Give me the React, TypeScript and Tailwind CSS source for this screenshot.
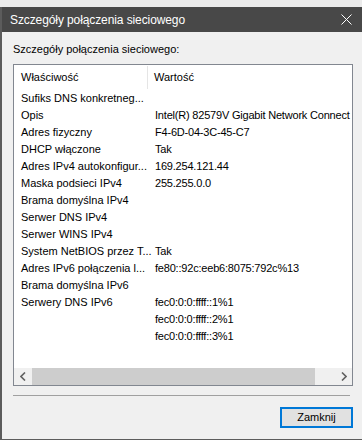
const rows: [string, string][] = [
  ["Sufiks DNS konkretneg...", ""],
  ["Opis", "Intel(R) 82579V Gigabit Network Connect"],
  ["Adres fizyczny", "F4-6D-04-3C-45-C7"],
  ["DHCP włączone", "Tak"],
  ["Adres IPv4 autokonfigur...", "169.254.121.44"],
  ["Maska podsieci IPv4", "255.255.0.0"],
  ["Brama domyślna IPv4", ""],
  ["Serwer DNS IPv4", ""],
  ["Serwer WINS IPv4", ""],
  ["System NetBIOS przez T...", "Tak"],
  ["Adres IPv6 połączenia l...", "fe80::92c:eeb6:8075:792c%13"],
  ["Brama domyślna IPv6", ""],
  ["Serwery DNS IPv6", "fec0:0:0:ffff::1%1"],
  ["", "fec0:0:0:ffff::2%1"],
  ["", "fec0:0:0:ffff::3%1"],
];

const font = { fontFamily: '"Liberation Sans", Arial, sans-serif' };

export default function App() {
  return (
    <div className="w-[362px] h-[440px] bg-[#f0f0f0] flex flex-col overflow-hidden text-black" style={font}>
      <div className="h-[7px] bg-[#ebebeb] shrink-0" />
      <div className="flex-1 flex flex-col border-l-2 border-b border-[#5c5c5c]">
        <div className="h-[25px] shrink-0 bg-[#484848] flex items-center justify-between pl-[8px] pr-[10px]">
          <span className="text-white text-[12px] leading-none tracking-[-0.1px]">Szczegóły połączenia sieciowego</span>
          <svg width="11" height="11" viewBox="0 0 11 11" className="text-white">
            <path d="M0.5 0.5 L10.5 10.5 M10.5 0.5 L0.5 10.5" stroke="currentColor" strokeWidth="1" />
          </svg>
        </div>
        <div className="flex flex-col pl-[11px] pt-[11px]">
          <div className="text-[11px] leading-[13px] h-[13px]">Szczegóły połączenia sieciowego:</div>
          <div className="mt-[8px] w-[340px] h-[322px] border border-[#828790] bg-white flex flex-col">
            <div className="h-[25px] shrink-0 flex text-[11px]">
              <div className="w-[134px] pl-[7px] flex items-center border-r border-[#e5e5e5] my-[1px]">Właściwość</div>
              <div className="pl-[6px] flex items-center">Wartość</div>
            </div>
            <div className="flex-1 flex flex-col text-[11px]">
              {rows.map(([k, v], i) => (
                <div key={i} className="h-[17px] flex items-center whitespace-nowrap">
                  <div className="w-[134px] pl-[7px] shrink-0">{k}</div>
                  <div className="pl-[7px] tracking-[-0.2px]">{v}</div>
                </div>
              ))}
            </div>
            <div className="h-[17px] shrink-0 bg-[#f0f0f0] flex items-center">
              <div className="w-[17px] h-[17px] flex items-center justify-center">
                <svg width="6" height="9" viewBox="0 0 6 9">
                  <path d="M5 0.5 L1 4.5 L5 8.5" fill="none" stroke="#606060" strokeWidth="1.6" />
                </svg>
              </div>
              <div className="w-[283px] h-[17px] bg-[#cdcdcd] ml-[1px]" />
              <div className="flex-1" />
              <div className="w-[17px] h-[17px] flex items-center justify-center">
                <svg width="6" height="9" viewBox="0 0 6 9">
                  <path d="M1 0.5 L5 4.5 L1 8.5" fill="none" stroke="#606060" strokeWidth="1.6" />
                </svg>
              </div>
            </div>
          </div>
          <div className="mt-[9px] w-[337px] h-[1px] bg-[#a0a0a0]" />
          <div className="mt-[11px] w-[340px] flex justify-end">
            <button className="w-[73px] h-[21px] border-2 border-[#0078d7] bg-[#e1e1e1] text-[11px] leading-none flex items-center justify-center">
              Zamknij
            </button>
          </div>
        </div>
      </div>
    </div>
  );
}
